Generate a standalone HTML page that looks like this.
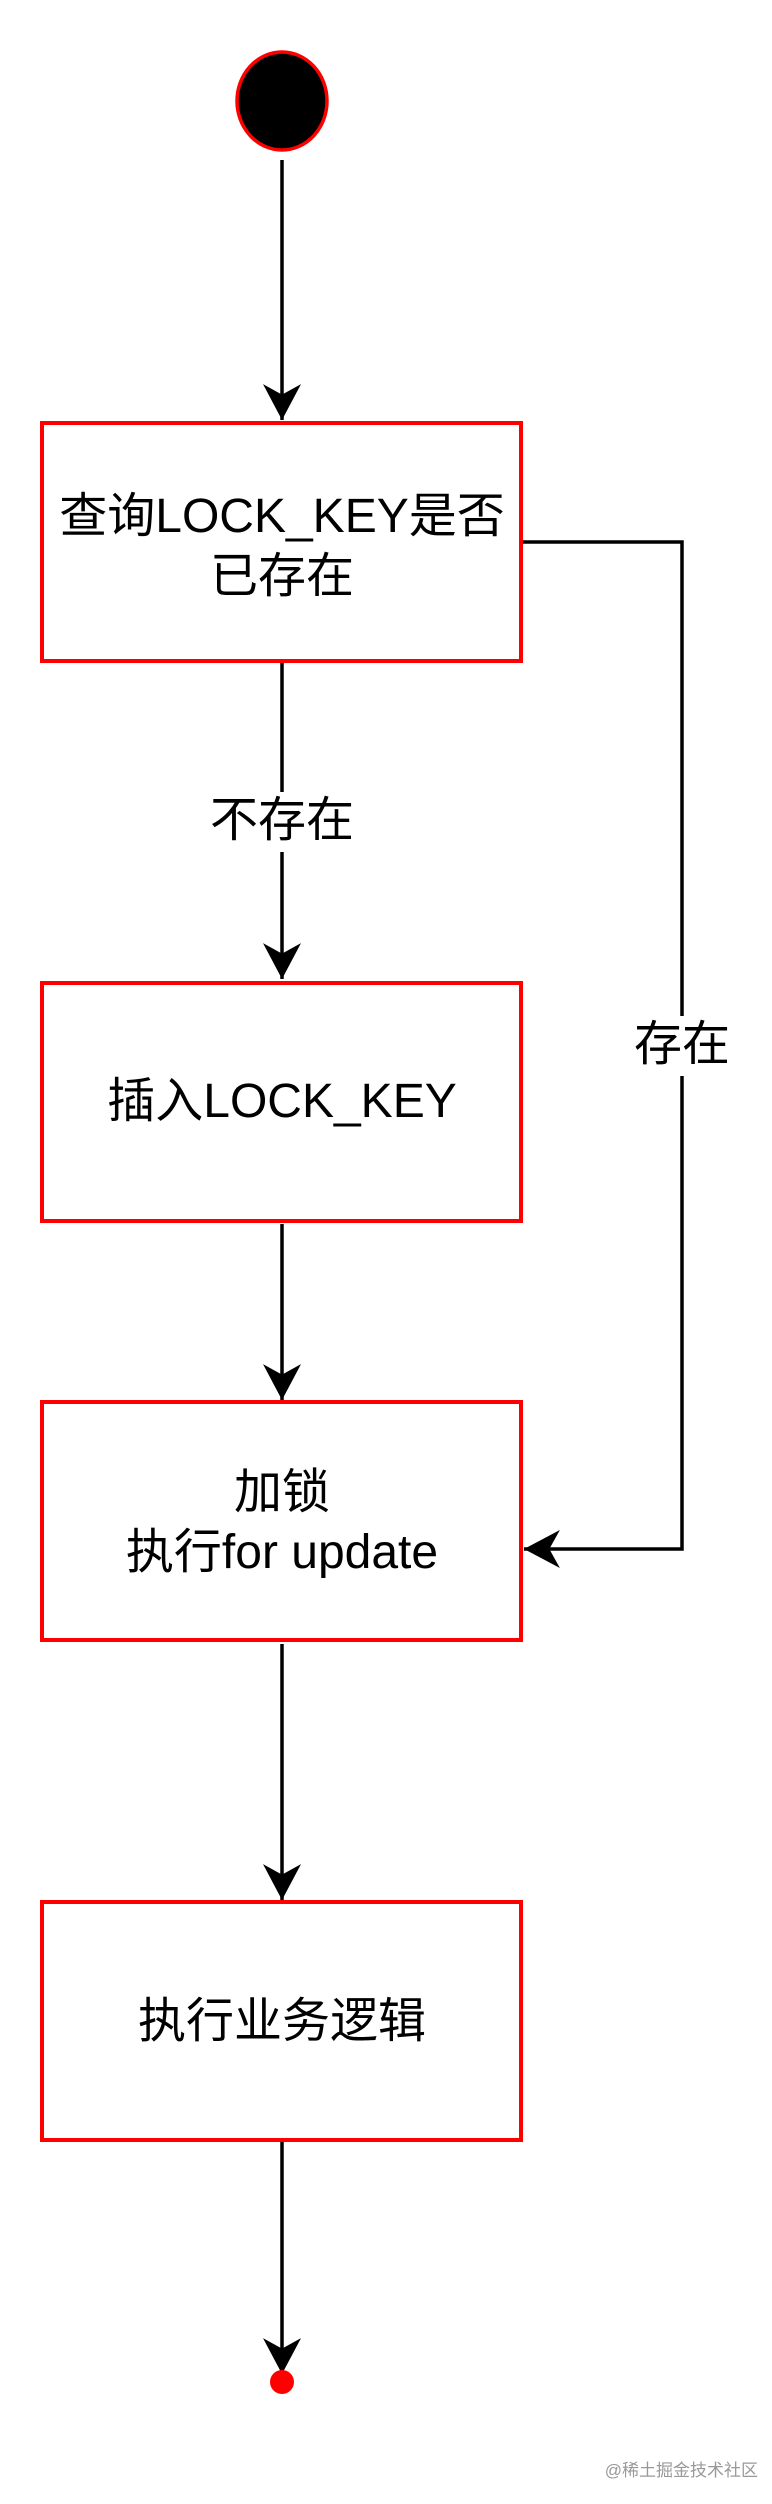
<!DOCTYPE html>
<html><head><meta charset="utf-8"><style>
html,body{margin:0;padding:0;background:#fff;width:772px;height:2504px;overflow:hidden}
svg{display:block}
text{font-family:"Liberation Sans","Noto Sans CJK SC",sans-serif;font-size:48px;fill:#000}
</style></head><body>
<svg width="772" height="2504" viewBox="0 0 772 2504" xmlns="http://www.w3.org/2000/svg">
<defs>
<marker id="a" markerWidth="38" markerHeight="38" viewBox="0 0 36 36" refX="34" refY="18" orient="auto" markerUnits="userSpaceOnUse">
<path d="M34 18 L0 0 L10 18 L0 36 Z" fill="#000"/>
</marker>
</defs>
<g stroke="#000" stroke-width="3.5" fill="none">
<line x1="282" y1="160" x2="282" y2="420" marker-end="url(#a)"/>
<line x1="282" y1="663" x2="282" y2="979" marker-end="url(#a)"/>
<line x1="282" y1="1224" x2="282" y2="1400" marker-end="url(#a)"/>
<line x1="282" y1="1644" x2="282" y2="1900" marker-end="url(#a)"/>
<line x1="282" y1="2142" x2="282" y2="2374" marker-end="url(#a)"/>
<polyline points="523,542 682,542 682,1549 524,1549" marker-end="url(#a)"/>
</g>
<ellipse cx="282" cy="101" rx="45" ry="49" fill="#000" stroke="#f00" stroke-width="3.5"/>
<circle cx="282" cy="2382" r="12" fill="#f00"/>
<g fill="none" stroke="#f00" stroke-width="4">
<rect x="42" y="423" width="479" height="238"/>
<rect x="42" y="983" width="479" height="238"/>
<rect x="42" y="1402" width="479" height="238"/>
<rect x="42" y="1902" width="479" height="238"/>
</g>
<rect x="200" y="792" width="164" height="60" fill="#fff"/>
<rect x="630" y="1016" width="104" height="60" fill="#fff"/>
<g text-anchor="middle">
<text x="282" y="532">查询LOCK_KEY是否</text>
<text x="282" y="592">已存在</text>
<text x="282" y="836">不存在</text>
<text x="682" y="1060">存在</text>
<text x="282" y="1117">插入LOCK_KEY</text>
<text x="282" y="1508">加锁</text>
<text x="282" y="1568">执行for update</text>
<text x="282" y="2037">执行业务逻辑</text>
</g>
<text x="758" y="2476" text-anchor="end" style="font-size:17px;fill:#999">@稀土掘金技术社区</text>
</svg>
</body></html>
